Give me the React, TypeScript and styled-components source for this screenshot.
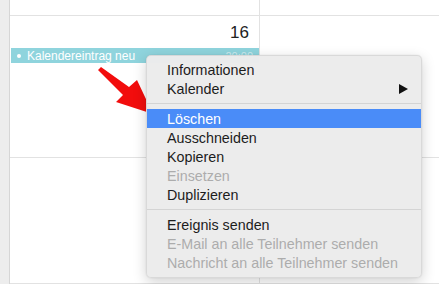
import React, { FunctionComponent } from 'react';
import styled, { createGlobalStyle } from 'styled-components';

const GlobalStyle = createGlobalStyle`
  html, body {
    margin: 0;
    padding: 0;
    background: #fff;
    font-family: "Liberation Sans", Arial, sans-serif;
  }
`;

const Page = styled.div`
  position: relative;
  width: 439px;
  height: 284px;
  overflow: hidden;
  display: flex;
  background: #fff;
`;

const Gutter = styled.div`
  width: 9px;
  flex: none;
  background: #ededed;
  border-right: 1px solid #d6d6d6;
`;

const Grid = styled.div`
  flex: 1;
  display: grid;
  grid-template-columns: 250px 1fr;
  grid-template-rows: 16px 142px 1fr;
`;

type CellProps = {
    last?: boolean
}

const Cell = styled.div`
  border-right: ${((props: CellProps) => props.last ? 'none' : '1px solid #e2e2e2')};
  border-bottom: 1px solid #e2e2e2;
  position: relative;
`;

const DayCell = styled(Cell)`
  display: flex;
  flex-direction: column;
  align-items: flex-end;
`;

const DayNumber = styled.div`
  font-size: 17px;
  color: #222;
  padding: 7px 10px 0 0;
  line-height: 20px;
`;

const EventBar = styled.div`
  align-self: stretch;
  margin: 5px 0 0 1px;
  height: 15px;
  background: #8fd4dd;
  display: flex;
  align-items: center;
  padding: 0 6px 0 6px;
  font-size: 12px;
  color: #fff;
`;

const Bullet = styled.span`
  width: 4px;
  height: 4px;
  border-radius: 50%;
  background: #fff;
  margin-right: 6px;
`;

const EventTitle = styled.span`
  flex: 1;
`;

const EventTime = styled.span`
  color: rgba(255, 255, 255, 0.55);
  font-size: 11px;
`;

const Menu = styled.div`
  position: absolute;
  left: 146px;
  top: 55px;
  width: 276px;
  padding: 4px 0 5px;
  background: rgba(236, 236, 236, 0.98);
  border: 1px solid rgba(0, 0, 0, 0.08);
  border-radius: 5px;
  box-shadow: 0 4px 14px rgba(0, 0, 0, 0.18), 0 0 1px rgba(0, 0, 0, 0.2);
  box-sizing: border-box;
`;

type ItemProps = {
    active?: boolean,
    disabled?: boolean
}

const Item = styled.div`
  height: 19px;
  display: flex;
  align-items: center;
  justify-content: space-between;
  padding: 0 13px 0 20px;
  font-size: 14.3px;
  background: ${((props: ItemProps) => props.active ? '#4a8cf8' : 'transparent')};
  color: ${((props: ItemProps) => props.active ? '#fff' : props.disabled ? '#acacac' : '#1c1c1c')};
`;

const Separator = styled.div`
  height: 11px;
  display: flex;
  align-items: center;
  &::after {
    content: '';
    flex: 1;
    height: 1px;
    background: #d4d4d4;
  }
`;

const Pointer = styled.svg`
  position: absolute;
  left: 95px;
  top: 62px;
`;

type Entry = { label: string, active?: boolean, disabled?: boolean, submenu?: boolean } | 'sep';

const entries: Entry[] = [
    { label: 'Informationen' },
    { label: 'Kalender', submenu: true },
    'sep',
    { label: 'Löschen', active: true },
    { label: 'Ausschneiden' },
    { label: 'Kopieren' },
    { label: 'Einsetzen', disabled: true },
    { label: 'Duplizieren' },
    'sep',
    { label: 'Ereignis senden' },
    { label: 'E-Mail an alle Teilnehmer senden', disabled: true },
    { label: 'Nachricht an alle Teilnehmer senden', disabled: true },
];

const SubmenuArrow: FunctionComponent = () => (
    <svg width="9" height="10" viewBox="0 0 9 10">
        <path d="M0 0 L9 5 L0 10 Z" fill="#111" />
    </svg>
);

export default function App() {
    return (
        <Page>
            <GlobalStyle />
            <Gutter />
            <Grid>
                <Cell />
                <Cell last />
                <DayCell>
                    <DayNumber>16</DayNumber>
                    <EventBar>
                        <Bullet />
                        <EventTitle>Kalendereintrag neu</EventTitle>
                        <EventTime>20:00</EventTime>
                    </EventBar>
                </DayCell>
                <Cell last />
                <Cell />
                <Cell last />
            </Grid>
            <Pointer width="65" height="62" viewBox="0 0 65 62">
                <path d="M3 8 L6 5 L34 25 L42 18 L58 52 L21 40 L28 33 Z" fill="#f20d0d" />
            </Pointer>
            <Menu>
                {entries.map((e, i) => e === 'sep'
                    ? <Separator key={i} />
                    : (
                        <Item key={i} active={e.active} disabled={e.disabled}>
                            <span>{e.label}</span>
                            {e.submenu && <SubmenuArrow />}
                        </Item>
                    ))}
            </Menu>
        </Page>
    );
}
